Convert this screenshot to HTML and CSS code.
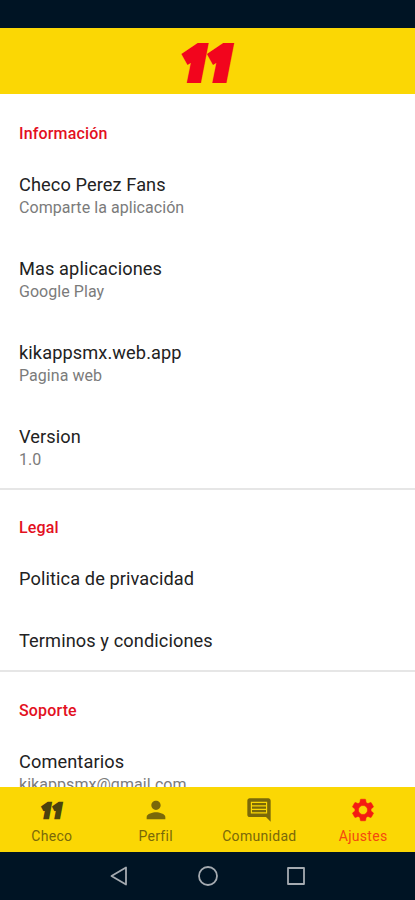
FILE: index.html
```html
<!DOCTYPE html>
<html lang="es">
<head>
<meta charset="utf-8">
<title>Ajustes</title>
<link rel="stylesheet" href="styles.css">
</head>
<body>
<div class="screen">
  <div class="status-bar"></div>
  <header class="app-bar">
    <svg class="logo" width="80" height="54" viewBox="0 0 80 54"><text x="14" y="40.5" textLength="51" lengthAdjust="spacingAndGlyphs">11</text></svg>
  </header>
  <main class="settings">
    <section class="group">
      <h2>Información</h2>
      <div class="item"><p class="title">Checo Perez Fans</p><p class="summary">Comparte la aplicación</p></div>
      <div class="item"><p class="title">Mas aplicaciones</p><p class="summary">Google Play</p></div>
      <div class="item"><p class="title">kikappsmx.web.app</p><p class="summary">Pagina web</p></div>
      <div class="item"><p class="title">Version</p><p class="summary">1.0</p></div>
    </section>
    <section class="group">
      <h2>Legal</h2>
      <div class="item single"><p class="title">Politica de privacidad</p></div>
      <div class="item single"><p class="title">Terminos y condiciones</p></div>
    </section>
    <section class="group">
      <h2>Soporte</h2>
      <div class="item"><p class="title">Comentarios</p><p class="summary">kikappsmx@gmail.com</p></div>
    </section>
  </main>
  <nav class="tabs">
    <a class="tab"><svg class="mini-logo" width="28" height="28" viewBox="0 0 28 28"><text x="3" y="22" textLength="22" lengthAdjust="spacingAndGlyphs">11</text></svg><span>Checo</span></a>
    <a class="tab"><svg width="28" height="28" viewBox="0 0 24 24"><path d="M12 12c2.210 0 4-1.790 4-4s-1.790-4-4-4-4 1.790-4 4 1.790 4 4 4zm0 2c-2.670 0-8 1.340-8 4v2h16v-2c0-2.660-5.330-4-8-4z"/></svg><span>Perfil</span></a>
    <a class="tab"><svg width="28" height="28" viewBox="0 0 24 24"><path fill-rule="evenodd" d="M22 4c0-1.100-.900-2-2-2H4c-1.100 0-2 .900-2 2v12c0 1.100.900 2 2 2h14l4 4V4zM5 5h14v10H5zM6 12h12v2H6zM6 9h12v2H6zM6 6h12v2H6z"/></svg><span>Comunidad</span></a>
    <a class="tab active"><svg width="28" height="28" viewBox="-1 -1 26 26"><path fill-rule="evenodd" d="M19.430 12.980c.040-.320.070-.640.070-.980s-.030-.660-.070-.980l2.110-1.650c.190-.150.240-.420.120-.640l-2-3.460c-.120-.220-.390-.300-.610-.220l-2.490 1c-.520-.400-1.080-.730-1.690-.980l-.380-2.650C14.460 2.180 14.250 2 14 2h-4c-.250 0-.460.180-.490.420l-.380 2.650c-.610.250-1.170.590-1.690.980l-2.490-1c-.230-.090-.490 0-.610.220l-2 3.460c-.130.220-.070.490.120.640l2.110 1.650c-.040.320-.070.650-.070.980s.030.660.070.980l-2.110 1.650c-.190.150-.240.420-.120.640l2 3.460c.120.220.390.300.610.220l2.490-1c.520.400 1.080.730 1.690.980l.380 2.650c.030.240.240.420.490.420h4c.250 0 .460-.180.490-.420l.380-2.650c.610-.250 1.170-.590 1.690-.980l2.490 1c.230.090.490 0 .610-.220l2-3.460c.120-.220.070-.490-.120-.640zM12 16.200a4.200 4.200 0 1 1 0-8.400 4.200 4.200 0 0 1 0 8.400z"/></svg><span>Ajustes</span></a>
  </nav>
  <div class="system-nav">
    <svg width="20" height="22" viewBox="0 0 20 22"><path d="M16 2.500v17L1.500 11z"/></svg>
    <svg width="22" height="22" viewBox="0 0 22 22"><circle cx="11" cy="11" r="9"/></svg>
    <svg width="20" height="22" viewBox="0 0 20 22"><rect x="2" y="3" width="16" height="16"/></svg>
  </div>
</div>
</body>
</html>
```
FILE: styles.css
```css
* { box-sizing: border-box; }
body { margin: 0; font-family: Roboto, sans-serif; background: #fff; }
h2, p { margin: 0; }
.screen { width: 415px; height: 900px; display: flex; flex-direction: column; overflow: hidden; }
.status-bar { flex: 0 0 28px; background: #001424; }
.app-bar { flex: 0 0 66px; background: #fbd704; display: flex; justify-content: center; padding-top: 11px; }
.logo text { font: italic 800 47px "Open Sans", sans-serif; fill: #f2051d; stroke: #f2051d; stroke-width: 6px; }
.settings { flex: 1; min-height: 0; overflow: hidden; }
.group + .group { border-top: 2px solid #e6e6e6; }
.group h2 { height: 60px; padding: 30px 19px 0; font-size: 16px; line-height: 20px; font-weight: 500; letter-spacing: .15px; color: #e3101e; }
.group + .group h2 { height: 58px; padding-top: 28px; }
.group:last-child h2 { height: 59px; padding-top: 29px; }
.item { height: 84px; padding: 20px 19px 0; }
.group:first-child .item:last-child { height: 82px; }
.single { height: 62px; }
.single:last-child { height: 60px; }
.title { font-size: 18.2px; line-height: 22px; letter-spacing: .1px; color: #222; white-space: nowrap; }
.summary { margin-top: 2px; font-size: 16px; line-height: 20px; letter-spacing: .05px; color: #7b7b7b; }
.tabs { flex: 0 0 65px; display: grid; grid-template-columns: repeat(4, 1fr); background: #fbd704; }
.tab { display: flex; flex-direction: column; align-items: center; padding-top: 9px; color: #7a6909; fill: currentColor; font-size: 14px; line-height: 16px; letter-spacing: .3px; }
.tab span { margin-top: 4px; }
.active { color: #f5480e; }
.active svg { fill: #f41b12; stroke: #f41b12; stroke-width: .5px; }
.mini-logo text { font: italic 800 21px "Open Sans", sans-serif; fill: #4c430d; stroke: #4c430d; stroke-width: 2.5px; }
.system-nav { flex: 0 0 48px; background: #001424; display: flex; justify-content: center; align-items: center; gap: 67px; }
.system-nav svg { fill: none; stroke: #a5abb1; stroke-width: 1.8px; stroke-linejoin: round; }
```
